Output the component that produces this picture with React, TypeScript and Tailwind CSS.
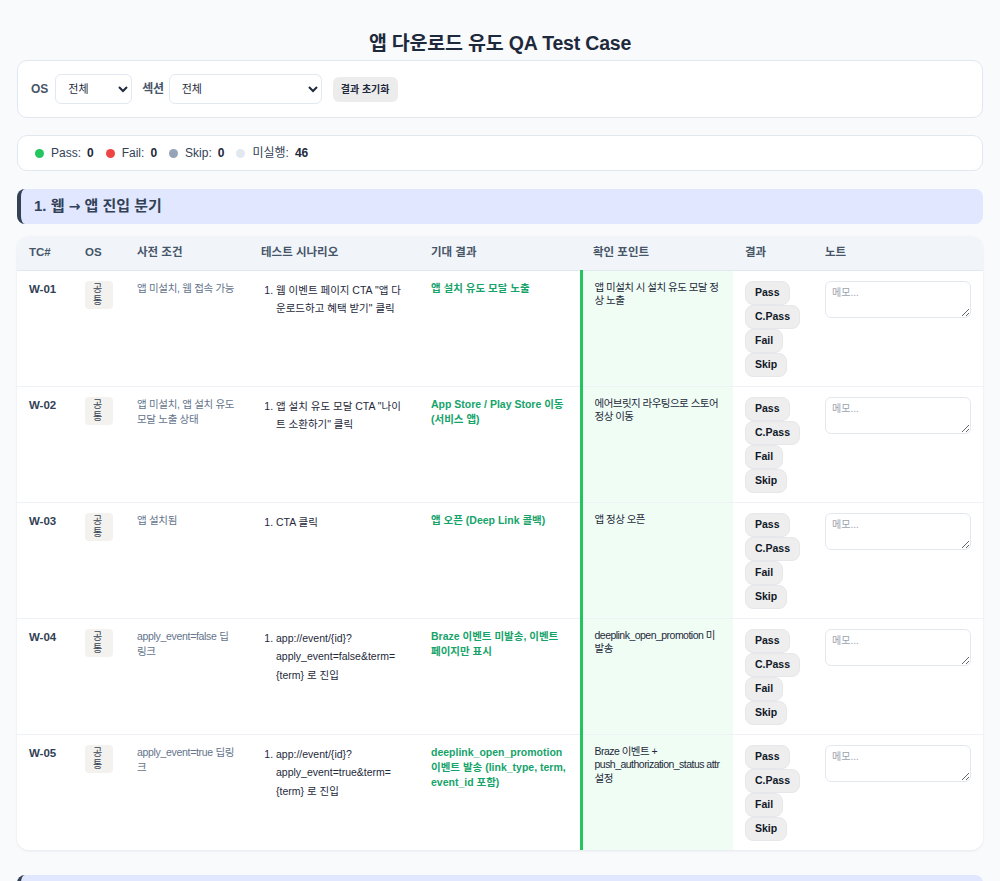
import React from 'react';

type Case = {
    id: string;
    os: string;
    pre: string;
    steps: string[];
    expected: string;
    check: string;
};

const cases: Case[] = [
    {
        id: 'W-01',
        os: '공통',
        pre: '앱 미설치, 웹 접속 가능',
        steps: ['웹 이벤트 페이지 CTA "앱 다운로드하고 혜택 받기" 클릭'],
        expected: '앱 설치 유도 모달 노출',
        check: '앱 미설치 시 설치 유도 모달 정상 노출',
    },
    {
        id: 'W-02',
        os: '공통',
        pre: '앱 미설치, 앱 설치 유도 모달 노출 상태',
        steps: ['앱 설치 유도 모달 CTA "나이트 소환하기" 클릭'],
        expected: 'App Store / Play Store 이동 (서비스 앱)',
        check: '에어브릿지 라우팅으로 스토어 정상 이동',
    },
    {
        id: 'W-03',
        os: '공통',
        pre: '앱 설치됨',
        steps: ['CTA 클릭'],
        expected: '앱 오픈 (Deep Link 콜백)',
        check: '앱 정상 오픈',
    },
    {
        id: 'W-04',
        os: '공통',
        pre: 'apply_event=false 딥링크',
        steps: ['app://event/{id}?apply_event=false&term={term} 로 진입'],
        expected: 'Braze 이벤트 미발송, 이벤트 페이지만 표시',
        check: 'deeplink_open_promotion 미발송',
    },
    {
        id: 'W-05',
        os: '공통',
        pre: 'apply_event=true 딥링크',
        steps: ['app://event/{id}?apply_event=true&term={term} 로 진입'],
        expected: 'deeplink_open_promotion 이벤트 발송 (link_type, term, event_id 포함)',
        check: 'Braze 이벤트 + push_authorization_status attr 설정',
    },
];

const results = ['Pass', 'C.Pass', 'Fail', 'Skip'];

const stats = [
    { label: 'Pass:', value: 0, dot: 'bg-[#22c55e]' },
    { label: 'Fail:', value: 0, dot: 'bg-[#ef4444]' },
    { label: 'Skip:', value: 0, dot: 'bg-[#94a3b8]' },
    { label: '미실행:', value: 46, dot: 'bg-[#e2e8f0]' },
];

export default function App() {
    return (
        <div className="min-h-screen bg-[#f8fafc] px-[17px] pt-[28px] pb-10 text-[#1e293b] font-['Liberation_Sans','Noto_Sans_CJK_KR',sans-serif]">
            <h1 className="text-center text-[19.5px] font-bold leading-[30px] tracking-[-0.01em] text-[#1e293b]">
                앱 다운로드 유도 QA Test Case
            </h1>

            {/* Filters */}
            <div className="mt-[2px] flex items-center rounded-[10px] border border-[#e2e8f0] bg-white px-[13px] py-[13px]">
                <label className="mr-[7px] text-[12px] font-semibold text-[#475569]">OS</label>
                <select className="h-[30px] w-[77px] rounded-md border border-[#e2e8f0] bg-white px-2 text-[11px] text-[#1e293b]">
                    <option>전체</option>
                </select>
                <label className="ml-[10px] mr-[5px] text-[12px] font-semibold tracking-[-0.03em] text-[#475569]">섹션</label>
                <select className="h-[30px] w-[153px] rounded-md border border-[#e2e8f0] bg-white px-2 text-[11px] text-[#1e293b]">
                    <option>전체</option>
                </select>
                <button className="ml-[11px] h-[25px] rounded-md bg-[#ececec] px-[8px] text-[10px] font-semibold text-[#1e293b]">
                    결과 초기화
                </button>
            </div>

            {/* Stats */}
            <div className="mt-[17px] flex h-[36px] items-center gap-[12px] rounded-[10px] border border-[#e2e8f0] bg-white px-[17px] text-[12px] text-[#334155]">
                {stats.map((s) => (
                    <div key={s.label} className="flex items-center">
                        <span className={`mr-[7px] h-[9px] w-[9px] rounded-full ${s.dot}`} />
                        <span>{s.label}</span>
                        <b className="ml-[6px] font-bold text-[#1e293b]">{s.value}</b>
                    </div>
                ))}
            </div>

            {/* Section 1 */}
            <div className="mt-[18px] flex h-[35px] items-center rounded-lg border-l-4 border-[#334155] bg-[#e0e7ff] pl-[13px]">
                <h2 className="text-[15px] font-bold text-[#334155]">
                    1. 웹 <span className="font-['DejaVu_Sans'] text-[14px]">→</span> 앱 진입 분기
                </h2>
            </div>

            <div className="mt-[12px] overflow-hidden rounded-xl bg-white shadow-[0_1px_3px_rgba(15,23,42,0.08)]">
                <table className="w-full table-fixed border-collapse text-left">
                    <colgroup>
                        <col className="w-[56px]" />
                        <col className="w-[52px]" />
                        <col className="w-[124px]" />
                        <col className="w-[170px]" />
                        <col className="w-[162px]" />
                        <col className="w-[152px]" />
                        <col className="w-[80px]" />
                        <col className="w-[170px]" />
                    </colgroup>
                    <thead>
                        <tr className="h-[34px] border-b border-[#e2e8f0] bg-[#f1f5f9] text-[11.5px] font-semibold text-[#475569]">
                            <th className="px-3 font-semibold">TC#</th>
                            <th className="px-3 font-semibold">OS</th>
                            <th className="px-3 font-semibold">사전 조건</th>
                            <th className="px-3 font-semibold">테스트 시나리오</th>
                            <th className="px-3 font-semibold">기대 결과</th>
                            <th className="px-3 font-semibold">확인 포인트</th>
                            <th className="px-3 font-semibold">결과</th>
                            <th className="px-3 font-semibold">노트</th>
                        </tr>
                    </thead>
                    <tbody>
                        {cases.map((c, i) => (
                            <tr
                                key={c.id}
                                className={`align-top ${i < cases.length - 1 ? 'border-b border-[#eef2f6]' : ''}`}
                            >
                                <td className="px-3 py-[10px] text-[11.5px] font-bold text-[#334155]">{c.id}</td>
                                <td className="px-3 py-[10px]">
                                    <span className="inline-block rounded bg-[#f3f2ee] px-2 py-[2px] text-[10px] leading-[12px] text-[#334155]">
                                        {c.os}
                                    </span>
                                </td>
                                <td className="px-3 py-[10px] text-[10.5px] leading-[15px] tracking-[-0.03em] text-[#64748b] break-words">
                                    {c.pre}
                                </td>
                                <td className="px-3 py-[10px] text-[10.5px] leading-[18.5px] text-[#1e293b]">
                                    <ol className="list-decimal pl-[15px] break-words">
                                        {c.steps.map((s) => (
                                            <li key={s}>{s}</li>
                                        ))}
                                    </ol>
                                </td>
                                <td className="px-3 py-[10px] text-[10.5px] font-bold leading-[15px] text-[#16a36a] break-words">
                                    {c.expected}
                                </td>
                                <td className="border-l-[3px] border-[#22c55e] bg-[#f0fdf4] px-3 py-[10px] text-[10.5px] leading-[13.5px] tracking-[-0.05em] text-[#1e293b] break-words">
                                    {c.check}
                                </td>
                                <td className="px-3 pt-[10px] pb-[9px]">
                                    <div className="flex flex-wrap">
                                        {results.map((r) => (
                                            <button
                                                key={r}
                                                className="h-[24px] rounded-lg border border-[#e5e7eb] bg-[#eeeeee] px-[9px] text-[10.5px] font-bold text-[#111827]"
                                            >
                                                {r}
                                            </button>
                                        ))}
                                    </div>
                                </td>
                                <td className="px-3 py-[10px]">
                                    <textarea
                                        placeholder="메모..."
                                        className="block h-[37px] w-full rounded-md border border-[#e2e8f0] px-[6px] py-[4px] text-[10px] leading-[13px] placeholder:text-[#9ca3af]"
                                    />
                                </td>
                            </tr>
                        ))}
                    </tbody>
                </table>
            </div>

            {/* Section 2 (continues below the fold) */}
            <div className="mt-[25px] flex h-[35px] items-center rounded-lg border-l-4 border-[#334155] bg-[#e0e7ff] pl-[13px]">
                <h2 className="text-[15px] font-bold text-[#334155]">2.</h2>
            </div>
        </div>
    );
}
